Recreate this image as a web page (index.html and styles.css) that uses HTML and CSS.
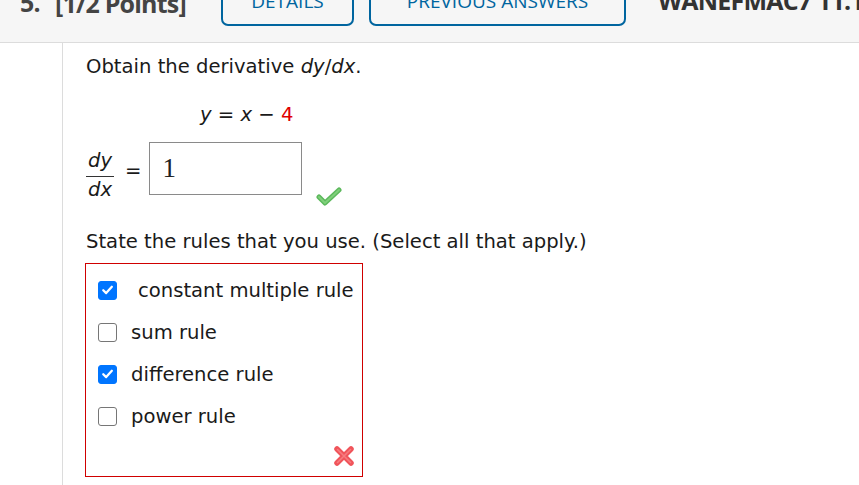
FILE: index.html
```html
<!DOCTYPE html>
<html>
<head>
<meta charset="utf-8">
<link rel="stylesheet" href="styles.css">
</head>
<body>
<div class="header">
  <div class="qnum">5.</div>
  <div class="points">[1/2 Points]</div>
  <div class="btn btn-details">DETAILS</div>
  <div class="btn btn-prev">PREVIOUS ANSWERS</div>
  <div class="source">WANEFMAC7 11.1.001.</div>
</div>
<div class="main">
  <div class="content">
    <p class="prompt">Obtain the derivative <i>dy</i>/<i>dx</i>.</p>
    <p class="equation"><i>y</i> = <i>x</i> − <span class="red">4</span></p>
    <div class="answer-row">
      <div class="frac">
        <span class="num"><i>dy</i></span>
        <span class="den"><i>dx</i></span>
      </div>
      <span class="eq">=</span>
      <div class="input">1</div>
      <svg class="check" width="26" height="20" viewBox="0 0 26 20">
        <path d="M3 11 L9 17 L23 4" fill="none" stroke="#5cb85c" stroke-width="5" stroke-linecap="round" stroke-linejoin="round"/>
        <path d="M3 11 L9 17 L23 4" fill="none" stroke="#7fd07a" stroke-width="2" stroke-linecap="round" stroke-linejoin="round"/>
      </svg>
    </div>
    <p class="prompt2">State the rules that you use. (Select all that apply.)</p>
    <div class="choices">
      <label class="choice"><span class="cb on"><svg width="18" height="18" viewBox="0 0 18 18"><path d="M4.5 9.2 L7.6 12.3 L13.6 5.6" fill="none" stroke="#fff" stroke-width="2.4" stroke-linecap="round" stroke-linejoin="round"/></svg></span><span class="lbl first">constant multiple rule</span></label>
      <label class="choice"><span class="cb"></span><span class="lbl">sum rule</span></label>
      <label class="choice"><span class="cb on"><svg width="18" height="18" viewBox="0 0 18 18"><path d="M4.5 9.2 L7.6 12.3 L13.6 5.6" fill="none" stroke="#fff" stroke-width="2.4" stroke-linecap="round" stroke-linejoin="round"/></svg></span><span class="lbl">difference rule</span></label>
      <label class="choice"><span class="cb"></span><span class="lbl">power rule</span></label>
      <div class="xrow">
        <svg width="22" height="22" viewBox="0 0 22 22">
          <path d="M4 4 L18 18 M18 4 L4 18" stroke="#f0545a" stroke-width="5.5" stroke-linecap="round"/>
          <path d="M4.5 4.5 L17.5 17.5 M17.5 4.5 L4.5 17.5" stroke="#f77b7f" stroke-width="1.6" stroke-linecap="round"/>
        </svg>
      </div>
    </div>
  </div>
</div>
</body>
</html>
```
FILE: styles.css
```css
html, body {
  margin: 0;
  padding: 0;
  background: #fff;
  overflow: hidden;
}
body {
  width: 859px;
  height: 485px;
  font-family: "DejaVu Sans", Verdana, sans-serif;
  color: #1a1a1a;
}
.header {
  height: 42px;
  background: #f6f6f6;
  border-bottom: 1px solid #dcdcdc;
  display: flex;
  align-items: flex-start;
  overflow: hidden;
  white-space: nowrap;
}
.header > * {
  flex-shrink: 0;
}
.qnum, .points, .source {
  font-family: "Open Sans", sans-serif;
  font-weight: 700;
  color: #444;
  letter-spacing: -0.8px;
}
.qnum {
  width: 35px;
  font-size: 25px;
  line-height: 26px;
  margin-top: -11px;
  margin-left: 20px;
}
.points {
  width: 166px;
  font-size: 25px;
  line-height: 26px;
  margin-top: -10px;
}
.btn {
  box-sizing: border-box;
  height: 40px;
  margin-top: -14px;
  padding-top: 3px;
  border: 2.5px solid #00659f;
  border-radius: 7px;
  color: #00659f;
  font-family: "Open Sans", sans-serif;
  font-size: 19px;
  line-height: 20px;
  text-align: center;
}
.btn-details {
  width: 133px;
}
.btn-prev {
  width: 257px;
  margin-left: 15px;
}
.source {
  font-size: 25px;
  line-height: 25px;
  margin-top: -12px;
  margin-left: 32px;
  color: #333;
}
.main {
  padding-left: 62px;
}
.content {
  border-left: 1px solid #dcdcdc;
  padding-left: 23px;
  height: 442px;
  font-size: 19.6px;
}
.prompt {
  margin: 0;
  padding-top: 12px;
  line-height: 24px;
}
.equation {
  margin: 0;
  padding-top: 24px;
  padding-left: 114px;
  line-height: 24px;
}
.red { color: #e00000; }
.answer-row {
  display: flex;
  align-items: flex-start;
  margin-top: 15px;
  height: 70px;
}
.frac {
  display: flex;
  flex-direction: column;
  align-items: center;
  margin-top: 8px;
}
.frac .num {
  line-height: 22px;
  padding: 0 2px 4px;
  border-bottom: 1px solid #333;
}
.frac .den {
  line-height: 22px;
  padding-top: 2px;
}
.eq {
  margin-left: 11px;
  margin-top: 19px;
  line-height: 20px;
}
.input {
  box-sizing: border-box;
  width: 153px;
  height: 53px;
  margin-left: 8px;
  border: 1px solid #8a8a8a;
  font-family: "Liberation Serif", serif;
  font-size: 27px;
  line-height: 30px;
  padding: 10px 0 0 12px;
  color: #222;
}
.check {
  margin-left: 14px;
  margin-top: 44px;
}
.prompt2 {
  margin: 0;
  padding-top: 18px;
  line-height: 24px;
}
.choices {
  box-sizing: border-box;
  width: 278px;
  height: 214px;
  margin-top: 9px;
  margin-left: -1px;
  border: 1px solid #d00000;
  padding: 5px 0 0 12px;
  display: flex;
  flex-direction: column;
}
.choice {
  display: flex;
  align-items: center;
  height: 42px;
}
.cb {
  box-sizing: border-box;
  width: 19px;
  height: 19px;
  border: 1px solid #767676;
  border-radius: 3px;
  background: #fff;
  display: flex;
  align-items: center;
  justify-content: center;
}
.cb.on {
  background: #0075ff;
  border-color: #0075ff;
}
.lbl {
  margin-left: 14px;
}
.lbl.first {
  margin-left: 21px;
}
.xrow {
  display: flex;
  justify-content: flex-end;
  padding-right: 7px;
  margin-top: 8px;
}
```
